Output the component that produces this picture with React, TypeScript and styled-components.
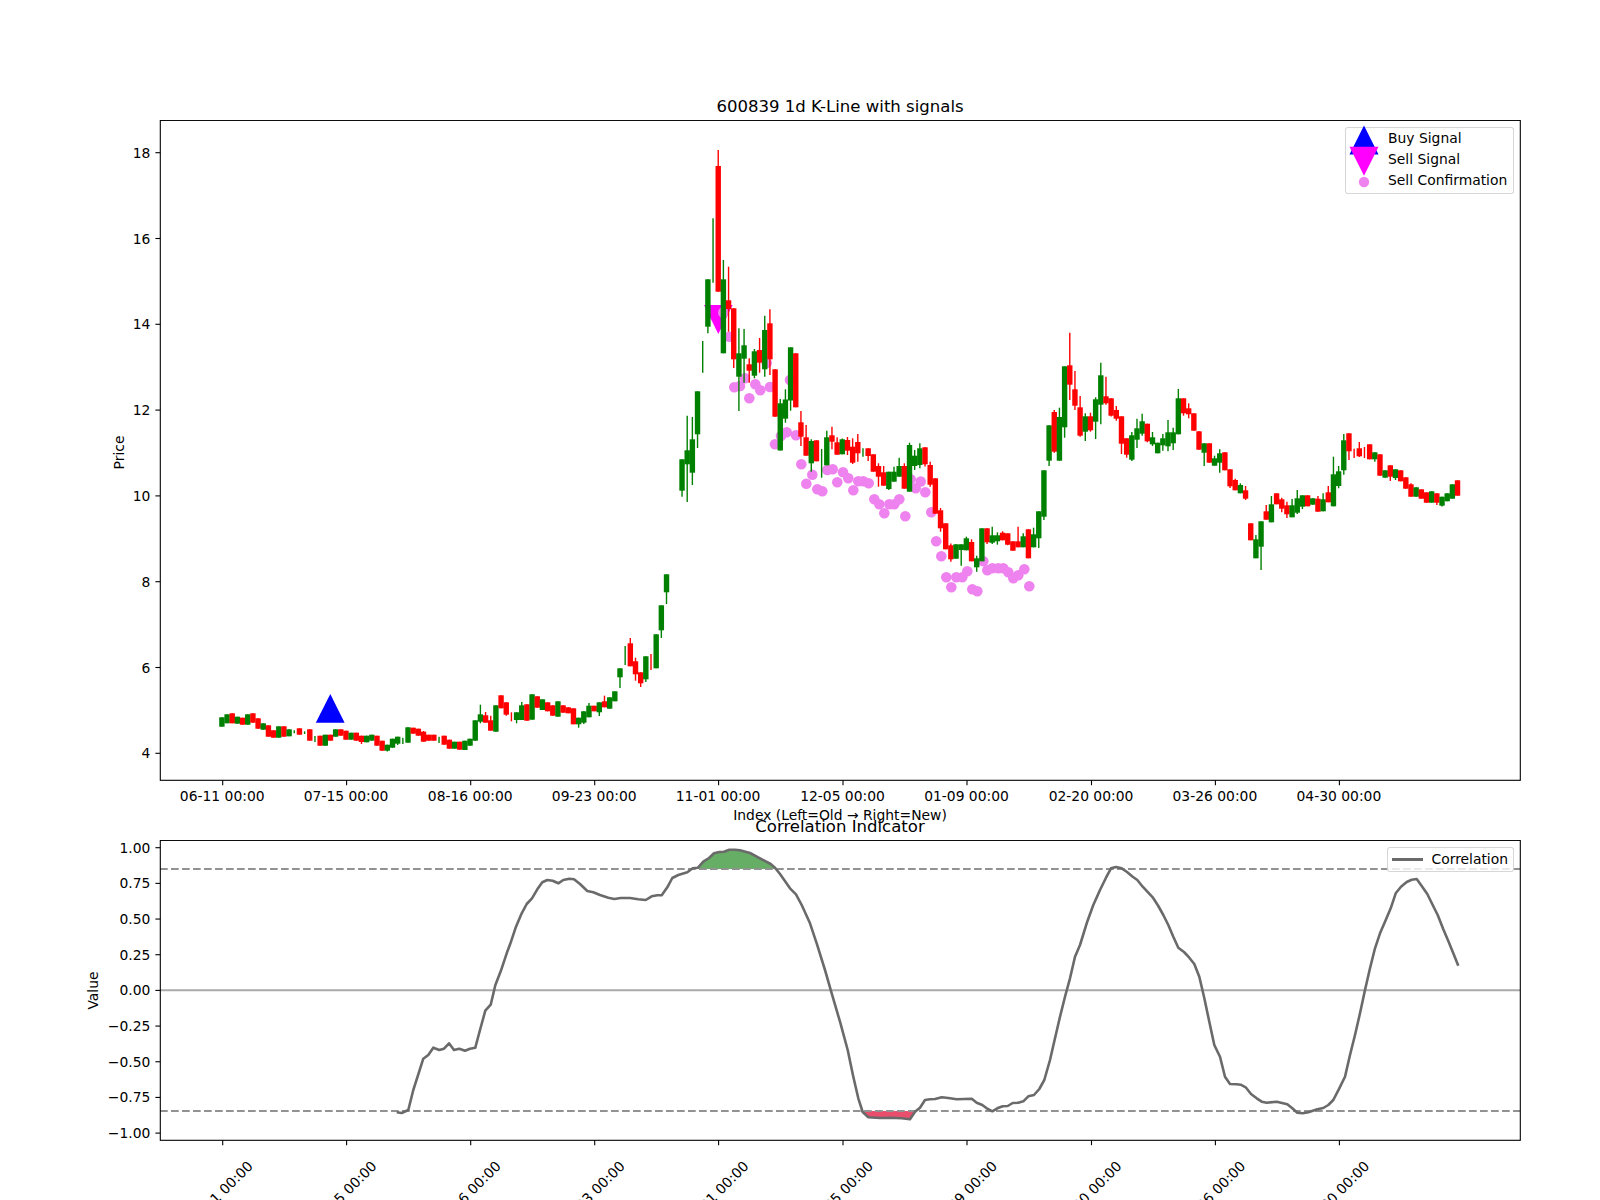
import * as React from 'react';
import styled, { createGlobalStyle } from 'styled-components';

const GlobalStyle = createGlobalStyle`
  html, body {
    margin: 0;
    padding: 0;
    background: #ffffff;
    font-family: "DejaVu Sans", sans-serif;
    color: #000000;
  }
`;

const Page = styled.div`
  display: flex;
  flex-direction: column;
  width: 1600px;
  height: 1200px;
  padding-top: 96px;
  box-sizing: border-box;
  overflow: hidden;
`;

const PlotTitle = styled.div<{ $overlap?: number }>`
  position: relative;
  z-index: 2;
  width: 1360px;
  height: 20px;
  margin: ${(p) => 1 - (p.$overlap || 0)}px 0 3px 160px;
  font-size: 16.55px;
  line-height: 20px;
  text-align: center;
`;

const AxisTitle = styled.div`
  width: 1360px;
  height: 17px;
  margin-left: 160px;
  font-size: 13.89px;
  line-height: 17px;
  text-align: center;
`;

const ChartFrame = styled.div<{ $height: number }>`
  position: relative;
  width: 1600px;
  height: ${(p) => p.$height}px;
  flex: none;
`;

const ChartSvg = styled.svg`
  display: block;
  width: 100%;
  height: 100%;
`;

const TickText = styled.text`
  font-size: 13.89px;
  fill: #000000;
`;

const Legend = styled.div<{ $width: number; $height: number }>`
  position: absolute;
  top: 7px;
  right: 86.5px;
  display: flex;
  align-items: center;
  box-sizing: border-box;
  width: ${(p) => p.$width}px;
  height: ${(p) => p.$height}px;
  background: rgba(255, 255, 255, 0.8);
  border: 1px solid rgba(204, 204, 204, 0.8);
  border-radius: 3px;
  font-size: 13.89px;
  line-height: 21px;
`;

const LegendMarks = styled.svg`
  flex: none;
  width: 43px;
  height: 67px;
  margin-left: -1px;
  overflow: visible;
`;

const LegendLabels = styled.div`
  display: flex;
  flex-direction: column;
  margin: -2px 0 0 0.5px;
  white-space: nowrap;
`;

const LegendLine = styled.span`
  flex: none;
  width: 31px;
  height: 2.5px;
  margin: 0 9px 0 4px;
  background: #6a6a6a;
`;

type Candle = ['r' | 'g', number, number, number?, number?];

// y values are already in page pixels, read off the price axis (0 means wick only, null means no bar)
const candles: (Candle | null)[] = [
  ['g', 717.3, 726.7], ['g', 714.3, 723.3], ['r', 713.3, 723.3], ['g', 716.7, 723.7], ['r', 717.7, 724.7],
  ['g', 714.3, 724.7], ['r', 713.3, 722.7], ['r', 718.3, 728.7], ['g', 723.3, 729.7], ['r', 725.3, 736.7],
  ['r', 730.3, 737.7], ['g', 726.3, 737.7], ['r', 726.3, 736.7], ['g', 729.3, 736.3], ['g', 0, 0, 730.3, 733.3],
  ['r', 728.3, 734.7], ['g', 0, 0, 731.3, 734], ['r', 729.3, 740.7], ['g', 0, 0, 736, 742], ['r', 735.7, 745.7],
  ['g', 734.7, 745.7], ['r', 734.7, 740.7], ['g', 729.3, 736.7], ['r', 729.3, 735.7], ['r', 730.7, 739.7],
  ['g', 732.7, 739.7], ['r', 732.7, 740.7], ['r', 735.7, 742, 735.7, 744], ['g', 735.7, 742.3], ['g', 734.7, 740.7],
  ['r', 735.7, 745.7], ['r', 740.7, 750.7], ['g', 744.7, 750.7, 744.7, 751.5], ['g', 738.7, 747.7], ['g', 736.7, 743.7, 736.7, 745],
  ['g', 0, 0, 737.7, 744], ['g', 727.3, 742.7], ['r', 727.7, 733.7], ['r', 728.7, 735.7], ['r', 731.7, 741.7, 731, 741.7],
  ['r', 734.7, 740.7], ['r', 734.7, 740.7], ['g', 0, 0, 736.7, 743], ['r', 735.7, 744.7], ['r', 739.7, 748.7],
  ['g', 741.7, 748.7], ['r', 741.7, 749.7], ['g', 740.7, 750], ['g', 738.7, 745.7], ['g', 720.3, 740.7],
  ['g', 714.3, 721.7, 704.7, 723.3], ['r', 715.3, 722.7, 712, 722.7], ['r', 720.3, 730.7, 715.7, 730.7], ['g', 705.3, 731.7], ['r', 695.3, 708.3],
  ['r', 702.3, 714.7, 702.3, 715.7], ['r', 0, 0, 712.3, 721.3], ['g', 712.3, 720, 712.3, 723.3], ['g', 705.3, 720, 702, 720], ['r', 704.3, 720.7],
  ['g', 694.3, 719.7], ['r', 696.3, 707.7], ['g', 699.3, 710], ['r', 702.3, 711.3], ['r', 705.3, 715.7],
  ['g', 701.3, 716.7], ['r', 705.3, 712.7], ['r', 707.3, 713.3], ['r', 708.3, 724.3], ['g', 717.7, 724.3, 717.7, 727.7],
  ['g', 711.3, 722.7, 711.3, 724], ['g', 705.7, 717.3, 703, 717.3], ['r', 705.7, 711.3], ['g', 702.3, 712.3, 702.3, 716], ['r', 701.3, 707.3, 695.7, 707.3],
  ['g', 697.3, 708.7], ['g', 691.3, 701.3], ['g', 668.3, 677.3, 668.3, 688], ['g', 0, 0, 646, 665], ['r', 643.3, 666.3, 638, 666.3],
  ['r', 661.3, 674.3, 657.7, 680.7], ['r', 672.3, 683.3, 672.3, 687], ['g', 656.3, 679.3, 656.3, 682], ['r', 0, 0, 654, 670], ['g', 634.3, 668.3],
  ['g', 605.3, 630.3, 605.3, 638], ['g', 574.3, 592.3, 574.3, 604], null, null, ['g', 459.3, 490.7, 459.3, 496.7],
  ['g', 450.3, 464.3, 415.7, 502], ['g', 439.3, 472.7, 417, 485], ['g', 391.3, 434.3, 391.3, 448], ['g', 0, 0, 341, 372.7], ['g', 279.3, 326.7, 279.3, 333.3],
  ['g', 0, 0, 218.3, 282.7], ['r', 166, 291.7, 150, 291.7], ['g', 279.3, 353.3, 260, 353.3], ['r', 300.3, 309, 266.7, 331.7], ['r', 308.3, 359.3, 308.3, 368],
  ['g', 353.3, 376.7, 328.3, 411], ['g', 345.3, 358.7, 329, 382.7], ['r', 364.3, 370.7, 358.3, 382.7], ['g', 351.3, 375.7, 349, 378.3], ['r', 350, 362.7, 338, 372.7],
  ['g', 330, 369.3, 315.7, 376.7], ['r', 323.3, 359.3, 309.3, 375], ['r', 369.3, 416.7], ['g', 403.3, 450.5, 399, 450.5], ['g', 399.5, 418.7, 389.3, 422.7],
  ['g', 347.3, 400.5, 347.3, 410.7], ['r', 353.3, 407.3], ['r', 422.3, 436.7, 411, 446], ['r', 437.3, 455.7, 425, 455.7], ['g', 441, 463.3, 439.3, 471.7],
  ['r', 440.3, 461.3], ['g', 0, 0, 449, 477.7], ['g', 437.3, 465.3, 430.7, 465.3], ['r', 435.3, 441.7, 426.7, 449.3], ['r', 442.3, 454.7, 437.3, 454.7],
  ['g', 439.3, 454.3, 438.5, 454.3], ['r', 440, 450.7, 437, 455], ['r', 446.7, 462.7, 438.3, 464], ['r', 442, 453.3, 434, 461.7], ['g', 0, 0, 448.3, 456.7],
  ['r', 448.3, 456, 448.3, 461], ['r', 454.3, 471.7], ['r', 466, 476.7, 463.3, 486.7], ['r', 472.3, 485.7, 466, 485.7], ['g', 471.7, 489, 471.7, 490],
  ['g', 471.7, 481.7, 466.7, 481.7], ['g', 466, 476.7, 457.7, 476.7], ['r', 466, 488.7, 463.3, 488.7], ['g', 445, 491.7, 442.7, 491.7], ['g', 455.7, 466, 450, 470],
  ['g', 448.3, 465, 443.3, 468.3], ['r', 447.3, 464.3, 447.3, 466.5], ['r', 465, 484.7, 461.7, 486.7], ['r', 478.3, 513.7], ['r', 510.3, 528.3, 508, 531.7],
  ['r', 523.3, 549.3], ['r', 545.3, 559.3, 543.5, 561.7], ['g', 544.3, 558.7], ['g', 544.3, 550, 544.3, 565.7], ['g', 538.3, 550.3, 536.7, 550.3],
  ['r', 542, 561.3, 539.3, 561.3], ['g', 558.3, 567.3, 555.7, 571.7], ['g', 528.3, 561.3], ['r', 528.3, 542.3, 528.3, 544], ['g', 535.3, 542.7, 526.7, 544],
  ['g', 535.3, 541.3, 532.3, 544.7], ['r', 532.7, 540.3, 531.3, 540.3], ['r', 533.3, 544.7, 533.3, 545.3], ['r', 541.3, 550.7], ['r', 541.3, 547.3, 526.7, 547.3],
  ['g', 536.3, 547.3, 533.3, 547.3], ['r', 529.3, 558.3], ['g', 534.3, 547.3, 527.7, 547.3], ['g', 511.3, 538.3, 511.3, 548], ['g', 470.3, 516.7, 470.3, 520],
  ['g', 425.3, 460.7, 425.3, 466], ['r', 412, 451.7, 410, 452.7], ['g', 417, 460.7, 407.7, 460.7], ['g', 366.3, 427.3, 366.3, 437.7], ['r', 365.3, 384.7, 332.7, 400],
  ['r', 389.3, 405.7, 371, 410], ['r', 407.3, 435.7, 396, 436.7], ['g', 416.3, 431.7, 413.3, 441], ['r', 416.3, 430.3, 412.7, 431.7], ['g', 399.3, 421.7, 397.3, 439],
  ['g', 375.3, 404.7, 362.7, 424.3], ['r', 396.3, 403.3, 376.7, 404.7], ['r', 398.3, 415.7, 398.3, 416.5], ['r', 410, 418.7, 406, 420.7], ['r', 416.3, 443.7, 416.3, 454],
  ['r', 438.3, 454.7, 438.3, 457.7], ['g', 435.3, 459.7, 432, 461], ['g', 428.3, 439.7, 418.7, 448], ['g', 421.3, 433.7, 413.7, 435.7], ['r', 423.7, 441.3, 423.7, 442.3],
  ['g', 437.3, 444.3, 432, 446], ['g', 442.7, 453.3], ['g', 438.3, 445.3, 434, 450.7], ['g', 432.3, 446.3, 420, 451.3], ['g', 432.3, 443.3, 427.7, 450],
  ['g', 398.3, 434.3, 389, 434.3], ['r', 398.3, 413.3, 398.3, 415.7], ['r', 408.3, 414.3, 403.3, 418.3], ['r', 413.3, 430.7], ['r', 431.3, 449.7],
  ['g', 443.3, 452.7, 443.3, 466], ['r', 443.3, 462.7], ['g', 458.3, 465.7, 455.7, 465.7], ['g', 453.3, 462.7, 449.3, 472.7], ['r', 452.3, 470.3],
  ['r', 469.3, 486.3, 469.3, 488], ['r', 480, 490.3, 478.7, 490.3], ['g', 485, 493.3, 483.3, 493.3], ['r', 490.3, 498.7, 486, 500], ['r', 523.3, 540.3],
  ['g', 539.3, 558.3, 535, 558.3], ['g', 521.3, 546.7, 521.3, 570], ['r', 511.3, 519.7, 505, 519.7], ['g', 504.3, 522.3, 496, 522.3], ['r', 493.3, 504.3],
  ['r', 499.3, 508.7, 497.7, 512.3], ['r', 505.3, 514.3, 501.7, 518], ['g', 505.3, 517.3, 499, 517.3], ['g', 498.3, 512.7, 490, 514], ['g', 495.3, 506.7, 495.3, 509],
  ['r', 495.3, 506.3], ['g', 498.3, 504.7], ['r', 498.7, 511.7, 496, 511.7], ['g', 499.3, 511.3, 493.3, 511.3], ['r', 492.3, 502.3, 486, 502.3],
  ['g', 474.3, 506.3, 456.7, 506.3], ['g', 471.3, 486, 466, 488.3], ['g', 440.3, 470.3, 434, 474.7], ['r', 433.3, 451.3, 433.3, 460], ['r', 0, 0, 448.7, 458],
  ['r', 448.3, 456.3, 442, 457], ['r', 0, 0, 447, 458], ['r', 444.3, 459.3], ['g', 452.3, 459.3, 452.3, 461.7], ['r', 454.3, 475.7],
  ['g', 470.3, 477.7], ['r', 465.3, 476.7, 465.3, 481], ['g', 469.3, 478, 469.3, 480], ['r', 470.3, 481.3], ['r', 477.3, 488.7],
  ['r', 484.3, 496.7, 483.3, 496.7], ['g', 487.3, 496.7], ['r', 489.3, 498.7], ['r', 492.3, 502.7], ['g', 491.3, 502.7],
  ['r', 493.3, 502.7, 493.3, 505], ['g', 496.7, 505.7, 496.7, 506.5], ['g', 493.3, 501.3], ['g', 484.3, 498.7], ['r', 480.3, 495.7],
];

const confirmations: [number, number][] = [
  [723.3, 312.5], [729.3, 336.7], [734.3, 387.3], [740, 386], [745, 378.3], [749.3, 398.3], [755.3, 384.3], [760.3, 390.3],
  [766.7, 363], [770, 387], [775, 444.3], [781, 436], [786.7, 432.3], [790, 380], [796, 435.3], [801.3, 464.3], [806.3, 483.7],
  [812.3, 474.7], [817.3, 489.3], [822.3, 491.3], [827.3, 470], [832.7, 469.3], [837.3, 482.3], [843, 472.3], [848.3, 478.3],
  [853.3, 490.3], [858.3, 481.3], [863.3, 481.3], [868.7, 483.3], [874.3, 499.3], [879.3, 504.3], [884.3, 513.3], [889.3, 504.3],
  [894.3, 504.3], [899.3, 499.3], [905.3, 516.3], [910.7, 479.3], [915.7, 488.3], [920.7, 481.5], [925.3, 492.3], [931.3, 512.3],
  [936.2, 541.3], [941.3, 556.3], [946.3, 577.3], [951.3, 587.3], [956.3, 577.3], [962.3, 577.3], [967.3, 571.3], [972.3, 589.3],
  [977.3, 591.3], [983.3, 561.3], [987.3, 570.3], [992.3, 568.3], [998.3, 568.3], [1003.3, 568.3], [1008.3, 572.3], [1013.3, 578.3],
  [1018.3, 575.3], [1024.3, 569.3], [1029.3, 586.3],
];

const correlation: [number, number][] = [
  [396.7, 1112.3], [401.7, 1113], [408.3, 1110], [413.3, 1090], [423.3, 1058.7], [428.3, 1055], [433.3, 1047.7], [439.3, 1050],
  [444, 1048.7], [449, 1043.3], [454, 1050], [459.3, 1048.7], [465, 1050.7], [470, 1048.7], [475.3, 1047.7], [480, 1030],
  [485.3, 1010.7], [490.7, 1004.7], [495.3, 985.3], [500.7, 971.3], [506.7, 953.3], [511, 941.7], [516, 926.7], [521.7, 913.3],
  [526.7, 904], [532, 898.3], [537.3, 889.3], [542.3, 882.3], [547.3, 880], [552.7, 880.7], [558.3, 883.3], [563.3, 880],
  [569.3, 878.7], [574, 879.3], [580, 884], [587.3, 891], [593.3, 892.3], [600, 895], [608.3, 897.7], [614.3, 899], [620.7, 898],
  [630, 898], [638.3, 899.3], [645.7, 900], [651.7, 896.3], [657.3, 895.3], [661.7, 895.3], [667.3, 887.3], [672.3, 878], [678.3, 875],
  [687.3, 872.3], [692.7, 868.3], [698, 867.7], [703.3, 861.7], [709, 858], [714, 853.3], [719.3, 852], [724, 851.7], [729.3, 849.7],
  [735, 849.7], [740, 850.3], [750, 853], [760, 858.3], [770.7, 864], [775, 867.7], [780, 874], [790, 888.3], [796, 894.3], [801.7, 905],
  [810, 923.3], [816.7, 943.3], [825, 970], [831.7, 993.3], [840, 1021.7], [847.7, 1050], [853.3, 1076.7], [858.3, 1098.3], [862.7, 1112],
  [868.3, 1117.3], [880, 1118], [890, 1117.7], [901.7, 1118.3], [910, 1119.3], [915, 1111.7], [920, 1107.7], [925, 1100], [930, 1099.3],
  [935, 1099], [941.7, 1097.3], [948.3, 1098], [956.7, 1099.3], [971.7, 1098.7], [976.7, 1102.7], [982.3, 1105], [987.3, 1108.7],
  [992.3, 1111.3], [997.3, 1108.3], [1002.7, 1106.3], [1007.7, 1106], [1012.7, 1103], [1018.3, 1102.7], [1023.3, 1101.3], [1028.3, 1096.3],
  [1034, 1095], [1039.3, 1089], [1044.3, 1080], [1050, 1060], [1055, 1038.3], [1060, 1016.7], [1065, 996.7], [1070, 978.3], [1075, 956.7],
  [1080, 945], [1086.7, 923.3], [1093.3, 905], [1100, 890], [1106, 877.7], [1111, 868.3], [1116, 867], [1121.7, 868.3], [1126.7, 871.7],
  [1132.7, 876.7], [1137.3, 880], [1142.7, 886.7], [1152.7, 897.3], [1158.3, 906], [1163.3, 915], [1168.3, 925], [1173.3, 936.7],
  [1178.3, 947.7], [1184, 952], [1189.3, 957.7], [1194.3, 964], [1199.3, 976.7], [1204, 996.7], [1209.3, 1021.7], [1214.3, 1045],
  [1220, 1056.7], [1225, 1076.7], [1230, 1084], [1236.7, 1084.3], [1240.7, 1084.7], [1245.7, 1087.3], [1251, 1094], [1256.7, 1098.3],
  [1261.7, 1101.7], [1266.7, 1102.7], [1276.7, 1101.7], [1287.3, 1104.3], [1292.3, 1108.3], [1297.3, 1112.7], [1302.7, 1113.3],
  [1308.3, 1112.3], [1317.3, 1109.3], [1323.3, 1108], [1328.3, 1105], [1333.3, 1100], [1339.3, 1088.3], [1345, 1076.7], [1350, 1055],
  [1355, 1035], [1360, 1013.3], [1365, 990], [1370, 968.3], [1375, 948.3], [1380, 933.3], [1385, 921.7], [1390.7, 908.3], [1395.7, 893.3],
  [1401, 886.7], [1406.7, 882], [1411.7, 879.7], [1416.7, 879], [1421.7, 886], [1427.3, 894], [1432.7, 905], [1437.7, 915], [1443.3, 929.3],
  [1448.3, 941], [1453.3, 953.3], [1458.3, 965.7],
];

const xTicks = [
  { x: 222.7, label: '06-11 00:00' },
  { x: 346.6, label: '07-15 00:00' },
  { x: 470.7, label: '08-16 00:00' },
  { x: 594.7, label: '09-23 00:00' },
  { x: 718.6, label: '11-01 00:00' },
  { x: 843, label: '12-05 00:00' },
  { x: 967, label: '01-09 00:00' },
  { x: 1091.5, label: '02-20 00:00' },
  { x: 1215.4, label: '03-26 00:00' },
  { x: 1339.4, label: '04-30 00:00' },
];

const priceTicks = [4, 6, 8, 10, 12, 14, 16, 18].map((v) => ({
  y: 753.3 - (v - 4) * 42.9,
  label: String(v),
}));

const valueTicks = [1, 0.75, 0.5, 0.25, 0, -0.25, -0.5, -0.75, -1].map((v) => ({
  y: 990.4 - v * 142.7,
  label: v.toFixed(2).replace('-', '\u2212'),
}));

const toPoints = (list: [number, number][]) => list.map(([x, y]) => `${x},${y}`).join(' ');

const inRange = (from: number, to: number) => correlation.filter(([x]) => x >= from && x <= to);

const fillArea = (from: number, to: number, level: number) =>
  toPoints([[from, level], ...inRange(from, to), [to, level]]);

const CandleBars = () => (
  <g>
    {candles.map((c, i) => {
      if (!c) return null;
      const [color, top, bottom, hi, lo] = c;
      const x = 221.9 + i * 5.17;
      const fill = color === 'r' ? '#ff0000' : '#008000';
      return (
        <g key={i}>
          <line x1={x} x2={x} y1={hi ?? top} y2={lo ?? bottom} stroke={fill} strokeWidth={1.4} />
          {top > 0 && <rect x={x - 2.7} y={top} width={5.4} height={bottom - top} fill={fill} />}
        </g>
      );
    })}
  </g>
);

const Axes = ({ top, bottom, yTicks }: { top: number; bottom: number; yTicks: { y: number; label: string }[] }) => (
  <g>
    <rect x={160.3} y={top} width={1360} height={bottom - top} fill="none" stroke="#000" strokeWidth={1.1} />
    {xTicks.map((t) => (
      <line key={t.label} x1={t.x} x2={t.x} y1={bottom} y2={bottom + 4.9} stroke="#000" strokeWidth={1.1} />
    ))}
    {yTicks.map((t) => (
      <g key={t.label}>
        <line x1={155.4} x2={160.3} y1={t.y} y2={t.y} stroke="#000" strokeWidth={1.1} />
        <TickText x={150.4} y={t.y + 5} textAnchor="end">
          {t.label}
        </TickText>
      </g>
    ))}
  </g>
);

const PriceChart = () => (
  <ChartSvg viewBox="0 120 1600 687">
    <polygon points="330.3,694 315.8,722.7 344.6,722.7" fill="#0000ff" />
    <polygon points="704,305 732.7,305 718.3,334" fill="#ff00ff" />
    {confirmations.map(([x, y], i) => (
      <circle key={i} cx={x} cy={y} r={5.3} fill="#ee82ee" />
    ))}
    <CandleBars />
    <Axes top={120.4} bottom={780.3} yTicks={priceTicks} />
    {xTicks.map((t) => (
      <TickText key={t.label} x={t.x - 0.5} y={801.4} textAnchor="middle">
        {t.label}
      </TickText>
    ))}
    <TickText x={0} y={0} textAnchor="middle" transform="translate(124 452.5) rotate(-90)">
      Price
    </TickText>
  </ChartSvg>
);

const CorrelationChart = () => (
  <ChartSvg viewBox="0 840 1600 360">
    <polygon points={fillArea(698, 775, 869)} fill="#66ad66" />
    <polygon points={fillArea(862.7, 915, 1111)} fill="#e94f6c" />
    <line x1={160} x2={1520} y1={869} y2={869} stroke="#929292" strokeWidth={2} strokeDasharray="7.7 3.3" />
    <line x1={160} x2={1520} y1={1111} y2={1111} stroke="#929292" strokeWidth={2} strokeDasharray="7.7 3.3" />
    <line x1={160} x2={1520} y1={990.2} y2={990.2} stroke="#aaaaaa" strokeWidth={2} />
    <polyline points={toPoints(correlation)} fill="none" stroke="#6a6a6a" strokeWidth={2.6} strokeLinejoin="round" />
    <Axes top={840.4} bottom={1140.3} yTicks={valueTicks} />
    {xTicks.map((t) => (
      <TickText key={t.label} x={0} y={0} textAnchor="middle" transform={`translate(${t.x + 1} 1197) rotate(-45)`}>
        {t.label}
      </TickText>
    ))}
    <TickText x={0} y={0} textAnchor="middle" transform="translate(98 990.5) rotate(-90)">
      Value
    </TickText>
  </ChartSvg>
);

const App = () => (
  <>
    <GlobalStyle />
    <Page>
      <PlotTitle>600839 1d K-Line with signals</PlotTitle>
      <ChartFrame $height={687}>
        <PriceChart />
        <Legend $width={169} $height={67}>
          <LegendMarks viewBox="0 0 43 67">
            <polygon points="19,-1.5 4.5,27.5 33.5,27.5" fill="#0000ff" />
            <polygon points="4.5,19.8 33.5,19.8 19,48.8" fill="#ff00ff" />
            <circle cx={19} cy={55} r={5.2} fill="#ee82ee" />
          </LegendMarks>
          <LegendLabels>
            <span>Buy Signal</span>
            <span>Sell Signal</span>
            <span>Sell Confirmation</span>
          </LegendLabels>
        </Legend>
      </ChartFrame>
      <AxisTitle>Index (Left=Old → Right=New)</AxisTitle>
      <PlotTitle $overlap={8}>Correlation Indicator</PlotTitle>
      <ChartFrame $height={360}>
        <CorrelationChart />
        <Legend $width={127} $height={25}>
          <LegendLine />
          <span>Correlation</span>
        </Legend>
      </ChartFrame>
    </Page>
  </>
);

export default App;
